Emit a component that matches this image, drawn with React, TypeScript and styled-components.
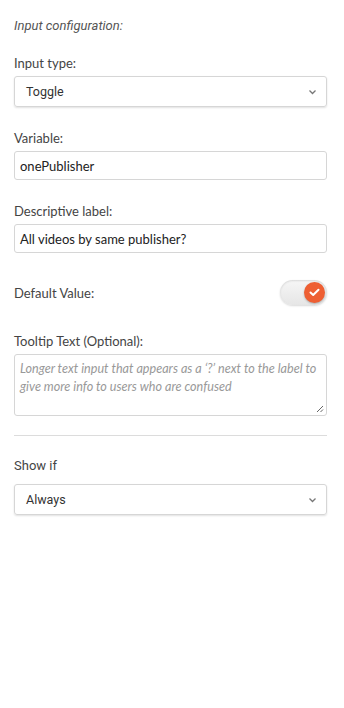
import React from "react";
import styled, { createGlobalStyle } from "styled-components";

const Global = createGlobalStyle`
  html, body { margin: 0; padding: 0; background: #fff; }
  * { box-sizing: border-box; }
`;

const Panel = styled.div`
  width: 344px;
  min-height: 708px;
  padding: 18px 17px 0 14px;
  display: flex;
  flex-direction: column;
  font-family: "Lato", "Liberation Sans", sans-serif;
  color: #333;
`;

const Heading = styled.div`
  font-family: Roboto, "Liberation Sans", sans-serif;
  font-style: italic;
  font-size: 13px;
  color: #555;
  line-height: 16px;
  margin-bottom: 21px;
`;

const Field = styled.div<{ $gap?: number }>`
  display: flex;
  flex-direction: column;
  margin-bottom: ${(p) => p.$gap ?? 0}px;
`;

const Label = styled.div<{ $roboto?: boolean }>`
  font-family: ${(p) => (p.$roboto ? 'Roboto, "Liberation Sans", sans-serif' : '"Lato", "Liberation Sans", sans-serif')};
  font-size: 13px;
  line-height: 16px;
  color: #444;
  margin-bottom: ${(p) => (p.$roboto ? 10 : 5)}px;
`;

const SelectBox = styled.div`
  height: 31px;
  border: 1px solid #d6d6d6;
  border-radius: 3px;
  box-shadow: 0 1px 2px rgba(0, 0, 0, 0.12);
  display: flex;
  align-items: center;
  justify-content: space-between;
  padding: 0 9px 0 11px;
  font-family: Roboto, "Liberation Sans", sans-serif;
  font-size: 12.5px;
  color: #333;
`;

const TextBox = styled.div`
  height: 29px;
  border: 1px solid #d6d6d6;
  border-radius: 3px;
  display: flex;
  align-items: center;
  padding: 0 5px;
  font-size: 13px;
  color: #222;
`;

const Row = styled.div`
  display: flex;
  align-items: center;
  justify-content: space-between;
  margin-bottom: 28px;
`;

const RowLabel = styled.div`
  font-size: 13px;
  color: #444;
  line-height: 16px;
`;

const Track = styled.div`
  width: 47px;
  height: 25px;
  border-radius: 13px;
  background: linear-gradient(#f6f6f6, #e6e6e6);
  box-shadow: inset 0 1px 2px rgba(0, 0, 0, 0.12), 0 1px 2px rgba(0, 0, 0, 0.15);
  display: flex;
  align-items: center;
  justify-content: flex-end;
  padding-right: 2px;
`;

const Knob = styled.div`
  width: 21px;
  height: 21px;
  border-radius: 50%;
  background: #ee5f33;
  box-shadow: 0 1px 2px rgba(0, 0, 0, 0.25);
  display: flex;
  align-items: center;
  justify-content: center;
`;

const TextArea = styled.div`
  position: relative;
  height: 62px;
  border: 1px solid #d6d6d6;
  border-radius: 3px;
  padding: 5px 4px 5px 5px;
  font-style: italic;
  font-size: 12.6px;
  line-height: 18px;
  color: #999;
`;

const Grip = styled.svg`
  position: absolute;
  right: 2px;
  bottom: 2px;
`;

const Divider = styled.hr`
  border: none;
  border-top: 1px solid #dcdcdc;
  margin: 19px 0 22px 0;
`;

const Chevron = () => (
  <svg width="9" height="6" viewBox="0 0 9 6">
    <path d="M1.5 1.5 L4.5 4.5 L7.5 1.5" fill="none" stroke="#777" strokeWidth="1.3" />
  </svg>
);

export default function App() {
  return (
    <>
      <Global />
      <Panel>
        <Heading>Input configuration:</Heading>
        <Field $gap={23}>
          <Label>Input type:</Label>
          <SelectBox>
            <span>Toggle</span>
            <Chevron />
          </SelectBox>
        </Field>
        <Field $gap={23}>
          <Label>Variable:</Label>
          <TextBox>onePublisher</TextBox>
        </Field>
        <Field $gap={27}>
          <Label>Descriptive label:</Label>
          <TextBox>All videos by same publisher?</TextBox>
        </Field>
        <Row>
          <RowLabel>Default Value:</RowLabel>
          <Track>
            <Knob>
              <svg width="11" height="9" viewBox="0 0 11 9">
                <path d="M1.5 4.5 L4.2 7 L9.5 1.8" fill="none" stroke="#fff" strokeWidth="2" strokeLinecap="round" strokeLinejoin="round" />
              </svg>
            </Knob>
          </Track>
        </Row>
        <Field>
          <Label>Tooltip Text (Optional):</Label>
          <TextArea>
            Longer text input that appears as a ‘?’ next to the label to give more info to users who are confused
            <Grip width="9" height="9" viewBox="0 0 9 9">
              <path d="M8 2 L2 8 M8 5.5 L5.5 8" stroke="#666" strokeWidth="1" />
            </Grip>
          </TextArea>
        </Field>
        <Divider />
        <Field>
          <Label $roboto>Show if</Label>
          <SelectBox>
            <span>Always</span>
            <Chevron />
          </SelectBox>
        </Field>
      </Panel>
    </>
  );
}
